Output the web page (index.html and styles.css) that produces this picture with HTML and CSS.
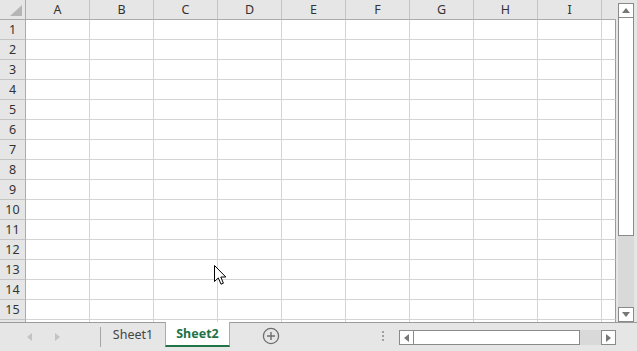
FILE: index.html
```html
<!DOCTYPE html>
<html lang="en">
<head>
    <meta charset="UTF-8">
    <title>Book1 - Sheet2</title>
    <link rel="stylesheet" href="styles.css">
</head>
<body>
    <div class="app">
        <div class="main">
            <div class="sheet">
                <!-- column headers -->
                <div class="corner"><span class="corner-mark"></span></div>
                <div class="ch">A</div><div class="ch">B</div><div class="ch">C</div><div class="ch">D</div><div class="ch">E</div><div class="ch">F</div><div class="ch">G</div><div class="ch">H</div><div class="ch">I</div><div class="ch last"></div>

                <!-- rows -->
                <div class="rh">1</div><div class="c"></div><div class="c"></div><div class="c"></div><div class="c"></div><div class="c"></div><div class="c"></div><div class="c"></div><div class="c"></div><div class="c"></div><div class="c edge"></div>
                <div class="rh">2</div><div class="c"></div><div class="c"></div><div class="c"></div><div class="c"></div><div class="c"></div><div class="c"></div><div class="c"></div><div class="c"></div><div class="c"></div><div class="c edge"></div>
                <div class="rh">3</div><div class="c"></div><div class="c"></div><div class="c"></div><div class="c"></div><div class="c"></div><div class="c"></div><div class="c"></div><div class="c"></div><div class="c"></div><div class="c edge"></div>
                <div class="rh">4</div><div class="c"></div><div class="c"></div><div class="c"></div><div class="c"></div><div class="c"></div><div class="c"></div><div class="c"></div><div class="c"></div><div class="c"></div><div class="c edge"></div>
                <div class="rh">5</div><div class="c"></div><div class="c"></div><div class="c"></div><div class="c"></div><div class="c"></div><div class="c"></div><div class="c"></div><div class="c"></div><div class="c"></div><div class="c edge"></div>
                <div class="rh">6</div><div class="c"></div><div class="c"></div><div class="c"></div><div class="c"></div><div class="c"></div><div class="c"></div><div class="c"></div><div class="c"></div><div class="c"></div><div class="c edge"></div>
                <div class="rh">7</div><div class="c"></div><div class="c"></div><div class="c"></div><div class="c"></div><div class="c"></div><div class="c"></div><div class="c"></div><div class="c"></div><div class="c"></div><div class="c edge"></div>
                <div class="rh">8</div><div class="c"></div><div class="c"></div><div class="c"></div><div class="c"></div><div class="c"></div><div class="c"></div><div class="c"></div><div class="c"></div><div class="c"></div><div class="c edge"></div>
                <div class="rh">9</div><div class="c"></div><div class="c"></div><div class="c"></div><div class="c"></div><div class="c"></div><div class="c"></div><div class="c"></div><div class="c"></div><div class="c"></div><div class="c edge"></div>
                <div class="rh">10</div><div class="c"></div><div class="c"></div><div class="c"></div><div class="c"></div><div class="c"></div><div class="c"></div><div class="c"></div><div class="c"></div><div class="c"></div><div class="c edge"></div>
                <div class="rh">11</div><div class="c"></div><div class="c"></div><div class="c"></div><div class="c"></div><div class="c"></div><div class="c"></div><div class="c"></div><div class="c"></div><div class="c"></div><div class="c edge"></div>
                <div class="rh">12</div><div class="c"></div><div class="c"></div><div class="c"></div><div class="c"></div><div class="c"></div><div class="c"></div><div class="c"></div><div class="c"></div><div class="c"></div><div class="c edge"></div>
                <div class="rh">13</div><div class="c"></div><div class="c"></div><div class="c"></div><div class="c"></div><div class="c"></div><div class="c"></div><div class="c"></div><div class="c"></div><div class="c"></div><div class="c edge"></div>
                <div class="rh">14</div><div class="c"></div><div class="c"></div><div class="c"></div><div class="c"></div><div class="c"></div><div class="c"></div><div class="c"></div><div class="c"></div><div class="c"></div><div class="c edge"></div>
                <div class="rh">15</div><div class="c"></div><div class="c"></div><div class="c"></div><div class="c"></div><div class="c"></div><div class="c"></div><div class="c"></div><div class="c"></div><div class="c"></div><div class="c edge"></div>
                <div class="rh"></div><div class="c"></div><div class="c"></div><div class="c"></div><div class="c"></div><div class="c"></div><div class="c"></div><div class="c"></div><div class="c"></div><div class="c"></div><div class="c edge"></div>

                <!-- mouse pointer -->
                <svg class="pointer" width="13" height="21" viewBox="0 0 13 21">
                    <path d="M0.5 0.5 L0.5 16.5 L4.3 12.9 L7 19.2 L9.4 18.2 L6.8 12 L11.8 12 Z" fill="#fff" stroke="#000" stroke-width="1" stroke-linejoin="miter"/>
                </svg>
            </div>

            <div class="vscroll">
                <div class="sbtn">
                    <svg width="8" height="5" viewBox="0 0 8 5"><path d="M0 5 L4 0 L8 5 Z" fill="#777"/></svg>
                </div>
                <div class="vthumb"></div>
                <div class="vtrack"></div>
                <div class="sbtn">
                    <svg width="8" height="5" viewBox="0 0 8 5"><path d="M0 0 L8 0 L4 5 Z" fill="#777"/></svg>
                </div>
            </div>
        </div>

        <div class="bottom">
            <div class="nav">
                <svg width="5" height="8" viewBox="0 0 5 8"><path d="M5 0 L0 4 L5 8 Z" fill="#c3c3c3"/></svg>
                <svg width="5" height="8" viewBox="0 0 5 8"><path d="M0 0 L5 4 L0 8 Z" fill="#c3c3c3"/></svg>
            </div>
            <div class="tab">Sheet1</div>
            <div class="tab active">Sheet2</div>
            <div class="add">
                <svg width="18" height="18" viewBox="0 0 18 18">
                    <circle cx="9" cy="9" r="7.6" fill="none" stroke="#6e6e6e" stroke-width="1.3"/>
                    <path d="M9 5 V13 M5 9 H13" stroke="#6e6e6e" stroke-width="1.4"/>
                </svg>
            </div>
            <div class="split"><i></i><i></i><i></i></div>
            <div class="hscroll">
                <div class="sbtn">
                    <svg width="5" height="8" viewBox="0 0 5 8"><path d="M5 0 L0 4 L5 8 Z" fill="#777"/></svg>
                </div>
                <div class="hthumb"></div>
                <div class="htrack"></div>
                <div class="sbtn">
                    <svg width="5" height="8" viewBox="0 0 5 8"><path d="M0 0 L5 4 L0 8 Z" fill="#777"/></svg>
                </div>
            </div>
        </div>
    </div>
</body>
</html>
```

FILE: styles.css
```css
* {
    box-sizing: border-box;
}

body {
    margin: 0;
    font-family: "Noto Sans", "Liberation Sans", Arial, sans-serif;
    background-color: #fff;
    color: #333;
}

.app {
    width: 637px;
    height: 351px;
    display: flex;
    flex-direction: column;
    overflow: hidden;
    background-color: #e6e6e6;
}

.main {
    display: flex;
    height: 322px;
}

/* grid */
.sheet {
    position: relative;
    width: 616px;
    height: 322px;
    overflow: hidden;
    display: grid;
    grid-template-columns: 26px repeat(9, 64px) 14px;
    grid-auto-rows: 20px;
    background-color: #fff;
}

.corner {
    background-color: #e6e6e6;
    border-right: 1px solid #ababab;
    border-bottom: 1px solid #ababab;
    display: flex;
    justify-content: flex-end;
    align-items: flex-end;
    padding: 0 3px 3px 0;
}

.corner-mark {
    width: 12px;
    height: 11px;
    background-color: #b5b5b5;
    clip-path: polygon(100% 0, 100% 100%, 0 100%);
}

.ch {
    background-color: #e6e6e6;
    border-right: 1px solid #c4c4c4;
    border-bottom: 1px solid #ababab;
    font-size: 12.5px;
    line-height: 19px;
    text-align: center;
    color: #333;
}

.ch.last {
    border-right: none;
}

.rh {
    background-color: #e6e6e6;
    border-right: 1px solid #ababab;
    border-bottom: 1px solid #c4c4c4;
    font-size: 12.5px;
    line-height: 19px;
    text-align: center;
    color: #333;
}

.c {
    border-right: 1px solid #d4d4d4;
    border-bottom: 1px solid #d4d4d4;
}

.c.edge {
    border-right: 1px solid #9b9b9b;
}

.pointer {
    position: absolute;
    left: 214px;
    top: 265px;
}

/* vertical scrollbar */
.vscroll {
    width: 21px;
    padding: 3px 3px 0 2px;
    display: flex;
    flex-direction: column;
    background-color: #e6e6e6;
}

.sbtn {
    width: 16px;
    height: 15px;
    background-color: #fff;
    border: 1px solid #8a8a8a;
    display: flex;
    align-items: center;
    justify-content: center;
    flex-shrink: 0;
}

.vthumb {
    height: 218px;
    background-color: #fff;
    border: 1px solid #8a8a8a;
    border-top: none;
}

.vtrack {
    flex: 1;
    background-color: #d9d9d9;
}

/* sheet tabs + horizontal scrollbar */
.bottom {
    flex: 1;
    display: flex;
    align-items: flex-start;
    border-top: 1px solid #9b9b9b;
    background-color: #e6e6e6;
}

.nav {
    width: 101px;
    height: 20px;
    margin-top: 4px;
    display: flex;
    align-items: center;
    gap: 23px;
    padding-left: 27px;
    border-right: 1px solid #a6a6a6;
}

.tab {
    width: 64px;
    height: 24px;
    line-height: 24px;
    font-size: 12.5px;
    text-align: center;
    color: #444;
}

.tab.active {
    width: 65px;
    margin-top: -1px;
    height: 25px;
    background-color: #fff;
    border-left: 1px solid #ababab;
    border-right: 1px solid #ababab;
    border-bottom: 2px solid #217346;
    color: #217346;
    font-weight: bold;
}

.add {
    margin-left: 32px;
    margin-top: 4px;
    display: flex;
}

.split {
    margin-left: 102px;
    margin-top: 8px;
    display: flex;
    flex-direction: column;
    gap: 2px;
}

.split i {
    width: 2px;
    height: 2px;
    background-color: #a0a0a0;
}

.hscroll {
    margin-left: 15px;
    margin-top: 7px;
    width: 217px;
    display: flex;
}

.hscroll .sbtn {
    width: 15px;
    height: 15px;
}

.hthumb {
    width: 166px;
    height: 15px;
    background-color: #fff;
    border: 1px solid #8a8a8a;
    border-left: none;
}

.htrack {
    flex: 1;
    height: 15px;
    background-color: #d9d9d9;
}
```
